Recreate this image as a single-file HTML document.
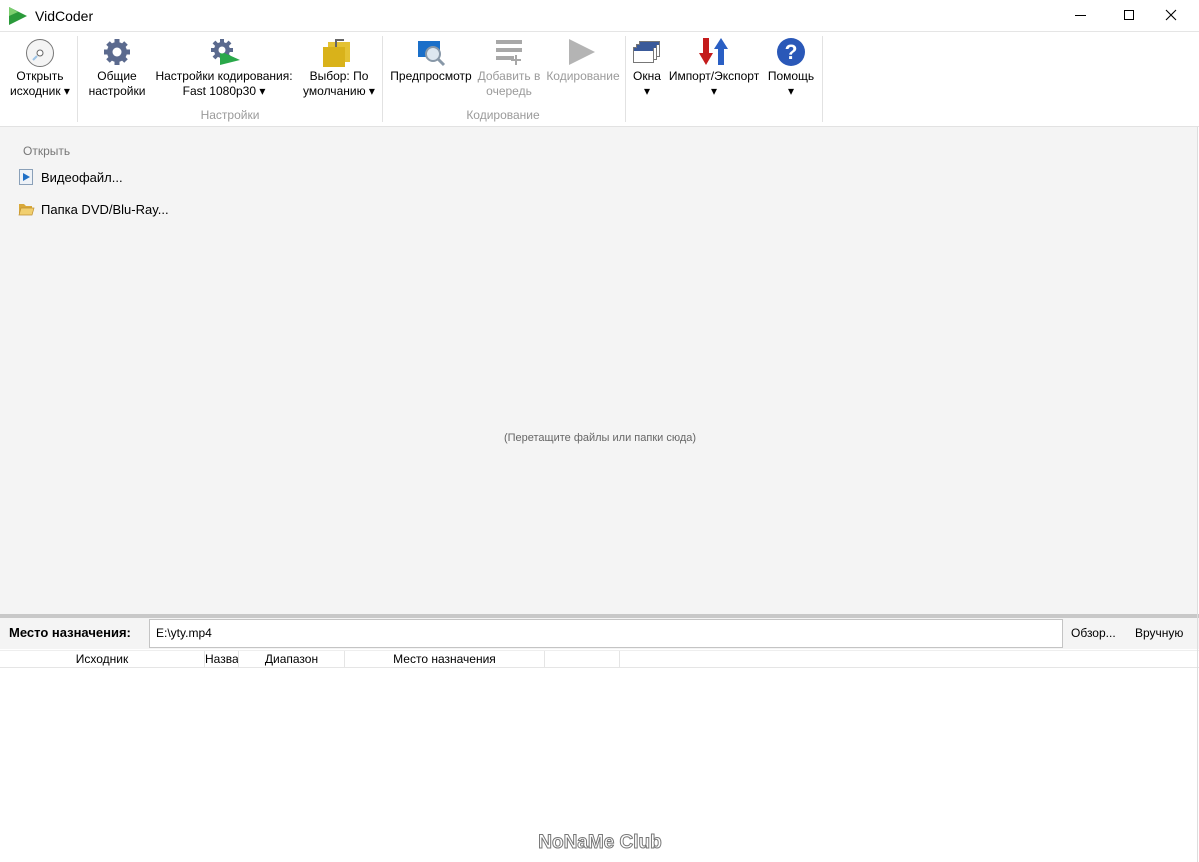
<!DOCTYPE html>
<html><head><meta charset="utf-8"><style>
*{margin:0;padding:0;box-sizing:border-box}
body{width:1199px;height:862px;overflow:hidden;background:#fff;font-family:"Liberation Sans",sans-serif;font-size:12px;color:#000;position:relative}
.a{position:absolute;white-space:nowrap}
.c{text-align:center}
.g{color:#9a9a9a}
.sep{position:absolute;top:36px;width:1px;height:86px;background:#e2e2e2}
</style></head><body>
<!-- title bar -->
<svg class="a" style="left:7px;top:6px" width="22" height="20"><polygon points="2,1 20,10 2,19" fill="#2a9a3a"/><polygon points="2,1 11,6 2,10" fill="#7ccf6e"/></svg>
<div class="a" style="left:35px;top:8px;font-size:14px">VidCoder</div>
<div class="a" style="left:1075px;top:15px;width:11px;height:1px;background:#000"></div>
<div class="a" style="left:1124px;top:10px;width:10px;height:10px;border:1px solid #000"></div>
<svg class="a" style="left:1165px;top:9px" width="12" height="12"><path d="M1 1L11 11M11 1L1 11" stroke="#000" stroke-width="1.1"/></svg>
<div class="a" style="left:0;top:31px;width:1199px;height:1px;background:#e5e5e5"></div>
<!-- ribbon -->
<svg class="a" style="left:25px;top:38px" width="30" height="30"><circle cx="15" cy="15" r="13.5" fill="#f4f4f4" stroke="#777"/><circle cx="15" cy="15" r="3" fill="#fff" stroke="#666"/><path d="M8 22L12 18" stroke="#9cc3e6" stroke-width="2"/></svg>
<div class="a c" style="left:5px;top:69px;width:70px;line-height:15px">Открыть<br>исходник ▾</div>
<div class="sep" style="left:77px"></div>
<svg class="a" style="left:102px;top:37px" width="30" height="30"><g fill="#5b6a8e"><circle cx="15" cy="15" r="10"/><g stroke="#5b6a8e" stroke-width="5"><path d="M15 2V28M2 15H28M6 6L24 24M24 6L6 24"/></g></g><circle cx="15" cy="15" r="4.5" fill="#fff"/></svg>
<div class="a c" style="left:82px;top:69px;width:70px;line-height:15px">Общие<br>настройки</div>
<svg class="a" style="left:208px;top:37px" width="34" height="30"><g fill="#5b6a8e"><circle cx="14" cy="13" r="8"/><g stroke="#5b6a8e" stroke-width="4"><path d="M14 2V24M3 13H25M6 5L22 21M22 5L6 21"/></g></g><polygon points="12,14 32,23 12,28" fill="#2aa84a"/><circle cx="14" cy="13" r="3.5" fill="#fff"/></svg>
<div class="a c" style="left:150px;top:69px;width:148px;line-height:15px">Настройки кодирования:<br>Fast 1080p30 ▾</div>
<svg class="a" style="left:322px;top:37px" width="30" height="30"><rect x="6" y="5" width="22" height="20" fill="#e4c233"/><rect x="1" y="10" width="22" height="20" fill="#d9b21a"/><path d="M14 10V3H22" stroke="#666" stroke-width="2" fill="none"/></svg>
<div class="a c" style="left:298px;top:69px;width:82px;line-height:15px">Выбор: По<br>умолчанию ▾</div>
<div class="a c g" style="left:150px;top:108px;width:160px">Настройки</div>
<div class="sep" style="left:382px"></div>
<svg class="a" style="left:417px;top:40px" width="30" height="28"><rect x="1" y="1" width="22" height="16" fill="#1a6fc9"/><circle cx="16" cy="14" r="7" fill="#dde7f0" stroke="#8898a8" stroke-width="2"/><path d="M21 19L27 25" stroke="#8898a8" stroke-width="3"/></svg>
<div class="a c" style="left:386px;top:69px;width:90px">Предпросмотр</div>
<svg class="a" style="left:494px;top:38px" width="30" height="28"><g fill="#a8a8a8"><rect x="2" y="2" width="26" height="4"/><rect x="2" y="10" width="26" height="4"/><rect x="2" y="18" width="18" height="4"/><rect x="21" y="17" width="2" height="10"/><rect x="17" y="21" width="10" height="2"/></g></svg>
<div class="a c g" style="left:474px;top:69px;width:70px;line-height:15px">Добавить в<br>очередь</div>
<svg class="a" style="left:567px;top:38px" width="30" height="28"><polygon points="2,1 28,14 2,27" fill="#b4b4b4"/></svg>
<div class="a c g" style="left:544px;top:69px;width:78px">Кодирование</div>
<div class="a c g" style="left:440px;top:108px;width:126px">Кодирование</div>
<div class="sep" style="left:625px"></div>
<svg class="a" style="left:632px;top:40px" width="30" height="26"><g fill="#fff" stroke="#777"><rect x="7.5" y="1.5" width="20" height="15"/><rect x="4.5" y="4.5" width="20" height="15"/><rect x="1.5" y="7.5" width="20" height="15"/></g><rect x="2" y="8" width="19" height="3" fill="#3a5a9a"/><rect x="5" y="5" width="19" height="3" fill="#3a5a9a"/><rect x="8" y="2" width="19" height="3" fill="#3a5a9a"/></svg>
<div class="a c" style="left:628px;top:69px;width:38px;line-height:15px">Окна<br>▾</div>
<svg class="a" style="left:699px;top:37px" width="30" height="30"><polygon points="4,1 10,1 10,16 14,16 7,28 0,16 4,16" fill="#c41c1c"/><polygon points="19,28 25,28 25,12 29,12 22,1 15,12 19,12" fill="#2a5fc4"/></svg>
<div class="a c" style="left:664px;top:69px;width:100px;line-height:15px">Импорт/Экспорт<br>▾</div>
<svg class="a" style="left:776px;top:37px" width="30" height="30"><circle cx="15" cy="15" r="14" fill="#2a58b8"/><text x="15" y="22" text-anchor="middle" font-family="Liberation Sans" font-weight="bold" font-size="21" fill="#fff">?</text></svg>
<div class="a c" style="left:764px;top:69px;width:54px;line-height:15px">Помощь<br>▾</div>
<div class="sep" style="left:822px"></div>
<div class="a" style="left:0;top:126px;width:1199px;height:1px;background:#e2e2e2"></div>
<!-- main -->
<div class="a" style="left:0;top:127px;width:1198px;height:487px;background:#f4f4f4"></div>
<div class="a g" style="left:23px;top:144px;color:#777">Открыть</div>
<svg class="a" style="left:19px;top:169px" width="14" height="16"><rect x="0.5" y="0.5" width="13" height="15" fill="#eef2f7" stroke="#8aa0b8"/><polygon points="4,4 11,8 4,12" fill="#1e6fc6"/></svg>
<div class="a" style="left:41px;top:170px;font-size:13px">Видеофайл...</div>
<svg class="a" style="left:18px;top:202px" width="17" height="14"><path d="M1 2H6L8 4H14V13H1Z" fill="#d9a93a"/><path d="M3 6H16L14 13H1Z" fill="#f1cf6f" stroke="#c09030" stroke-width=".7"/></svg>
<div class="a" style="left:41px;top:202px;font-size:13px">Папка DVD/Blu-Ray...</div>
<div class="a c" style="left:400px;top:432px;width:400px;font-size:11px;color:#666">(Перетащите файлы или папки сюда)</div>
<div class="a" style="left:0;top:614px;width:1199px;height:4px;background:#c8c8c8"></div>
<!-- destination -->
<div class="a" style="left:0;top:618px;width:1199px;height:31px;background:#f4f4f4"></div>
<div class="a" style="left:9px;top:625px;font-size:13px;font-weight:bold">Место назначения:</div>
<div class="a" style="left:149px;top:619px;width:914px;height:29px;background:#fff;border:1px solid #c4c4c4"></div>
<div class="a" style="left:156px;top:626px">E:\yty.mp4</div>
<div class="a" style="left:1071px;top:626px">Обзор...</div>
<div class="a" style="left:1135px;top:626px">Вручную</div>
<!-- header -->
<div class="a" style="left:0;top:667px;width:1199px;height:1px;background:#e5e5e5"></div>
<div class="a" style="left:0;top:650px;width:1199px;height:1px;background:#eee"></div>
<div class="a c" style="left:0;top:652px;width:204px">Исходник</div>
<div class="a" style="left:204px;top:651px;width:1px;height:16px;background:#e5e5e5"></div>
<div class="a" style="left:205px;top:652px">Назва</div>
<div class="a" style="left:238px;top:651px;width:1px;height:16px;background:#e5e5e5"></div>
<div class="a c" style="left:239px;top:652px;width:105px">Диапазон</div>
<div class="a" style="left:344px;top:651px;width:1px;height:16px;background:#e5e5e5"></div>
<div class="a c" style="left:345px;top:652px;width:199px">Место назначения</div>
<div class="a" style="left:544px;top:651px;width:1px;height:16px;background:#e5e5e5"></div>
<div class="a" style="left:619px;top:651px;width:1px;height:16px;background:#e5e5e5"></div>
<div class="a" style="left:1197px;top:127px;width:1px;height:735px;background:#ddd"></div>
<div class="a c" style="left:530px;top:832px;width:140px;font-size:19px;font-weight:bold;color:#fff;-webkit-text-stroke:1px #777;letter-spacing:0px">NoNaMe Club</div>
</body></html>
